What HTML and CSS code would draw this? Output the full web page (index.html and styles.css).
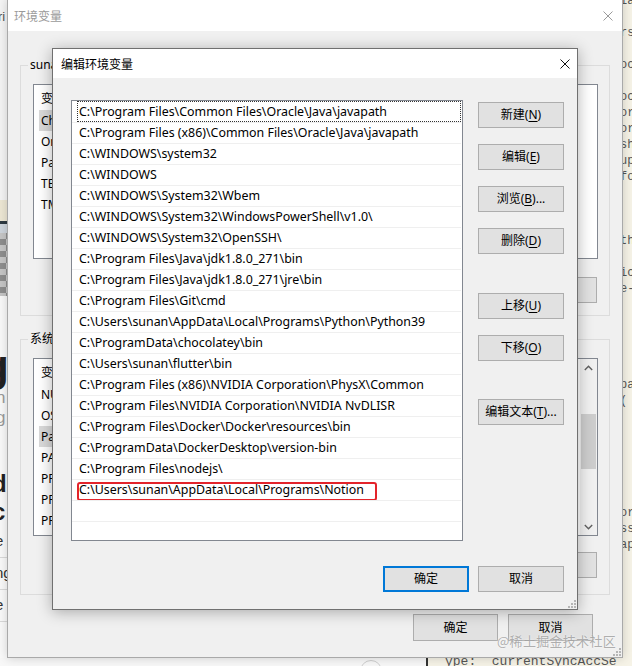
FILE: index.html
```html
<!DOCTYPE html>
<html lang="zh-CN">
<head>
<meta charset="utf-8">
<title>编辑环境变量</title>
<link rel="stylesheet" href="styles.css">
</head>
<body>
<div class="desk">
  <div class="bg-left">
    <div class="bl-top"><span class="bl-ri">ri</span></div>
    <div class="bl-beige"></div>
    <div class="bl-dark"></div>
    <div class="bl-blue"></div>
    <div class="bl-checker"></div>
    <div class="bl-page">
      <div class="bl-big">g</div>
      <div class="bl-gray">n</div>
      <div class="bl-gray">g</div>
      <div class="bl-bold bl-d">d</div>
      <div class="bl-bold">c</div>
      <div class="bl-line">e</div>
      <div class="bl-line">ng</div>
      <div class="bl-line">e</div>
    </div>
  </div>

  <div class="bg-right">
<pre class="code">ia

rs

oc

oc
or
or
sh
up
fo



th

ic
e-





pa
(






or
ss
ap







</pre>
  </div>

  <div class="bg-bottom">
    <div class="bb-left"><span class="bb-circle"></span></div>
    <div class="bb-rule"></div>
    <div class="bb-code">ype:  currentSyncAccSe</div>
  </div>

  <div class="win win-outer">
    <div class="titlebar outer-title">
      <span class="title-text inactive">环境变量</span>
      <svg class="close" width="10" height="10" viewBox="0 0 10 10"><path d="M0.5 0.5 L9.5 9.5 M9.5 0.5 L0.5 9.5" stroke="#9a9a9a" stroke-width="1" fill="none"/></svg>
    </div>
    <div class="outer-body">
      <div class="group group-user">
        <span class="group-label">sunan 的用户变量(<u>U</u>)</span>
        <div class="vlist vlist-user">
          <div class="vlist-body">
            <div class="vhead"><span class="vcol">变量</span><span class="vcol">值</span></div>
            <div class="vrow"><span class="vname sel">ChocolateyLastPathUpdate</span></div>
            <div class="vrow"><span class="vname">OneDrive</span></div>
            <div class="vrow"><span class="vname">Path</span></div>
            <div class="vrow"><span class="vname">TEMP</span></div>
            <div class="vrow"><span class="vname">TMP</span></div>
          </div>
        </div>
        <div class="group-actions">
          <div class="btn wbtn">新建(<u>N</u>)...</div>
          <div class="btn wbtn">编辑(<u>E</u>)...</div>
          <div class="btn wbtn">删除(<u>D</u>)</div>
        </div>
      </div>

      <div class="group group-sys">
        <span class="group-label">系统变量(<u>S</u>)</span>
        <div class="vlist vlist-sys">
          <div class="vlist-body">
            <div class="vhead"><span class="vcol">变量</span><span class="vcol">值</span></div>
            <div class="vrow"><span class="vname">NUMBER_OF_PROCESSORS</span></div>
            <div class="vrow"><span class="vname">OS</span></div>
            <div class="vrow"><span class="vname sel">Path</span></div>
            <div class="vrow"><span class="vname">PATHEXT</span></div>
            <div class="vrow"><span class="vname">PROCESSOR_ARCHITECTURE</span></div>
            <div class="vrow"><span class="vname">PROCESSOR_IDENTIFIER</span></div>
            <div class="vrow"><span class="vname">PROCESSOR_LEVEL</span></div>
          </div>
          <div class="vscroll">
            <div class="sb-arrow"><svg width="9" height="6" viewBox="0 0 9 6"><path d="M0.8 5 L4.5 1.3 L8.2 5" stroke="#606060" stroke-width="1.4" fill="none"/></svg></div>
            <div class="sb-track"><div class="sb-thumb"></div></div>
            <div class="sb-arrow"><svg width="9" height="6" viewBox="0 0 9 6"><path d="M0.8 1 L4.5 4.7 L8.2 1" stroke="#606060" stroke-width="1.4" fill="none"/></svg></div>
          </div>
        </div>
        <div class="group-actions">
          <div class="btn wbtn">新建(<u>W</u>)...</div>
          <div class="btn wbtn">编辑(<u>I</u>)...</div>
          <div class="btn wbtn">删除(<u>L</u>)</div>
        </div>
      </div>

      <div class="outer-footer">
        <div class="btn obtn">确定</div>
        <div class="btn obtn">取消</div>
      </div>
    </div>
    <svg class="grip grip-outer" width="8" height="8" viewBox="0 0 8 8"><g fill="#b5b5b5"><rect x="6" y="0" width="2" height="2"/><rect x="3" y="3" width="2" height="2"/><rect x="6" y="3" width="2" height="2"/><rect x="0" y="6" width="2" height="2"/><rect x="3" y="6" width="2" height="2"/><rect x="6" y="6" width="2" height="2"/></g></svg>
  </div>

  <div class="win win-inner">
    <div class="titlebar inner-title">
      <span class="title-text">编辑环境变量</span>
      <svg class="close close-inner" width="10" height="10" viewBox="0 0 10 10"><path d="M0.5 0.5 L9.5 9.5 M9.5 0.5 L0.5 9.5" stroke="#111" stroke-width="1" fill="none"/></svg>
    </div>
    <div class="inner-body">
      <div class="inner-main">
        <div class="plist">
          <div class="prow focus"><span class="pcell">C:\Program Files\Common Files\Oracle\Java\javapath</span></div>
          <div class="prow"><span class="pcell">C:\Program Files (x86)\Common Files\Oracle\Java\javapath</span></div>
          <div class="prow"><span class="pcell">C:\WINDOWS\system32</span></div>
          <div class="prow"><span class="pcell">C:\WINDOWS</span></div>
          <div class="prow"><span class="pcell">C:\WINDOWS\System32\Wbem</span></div>
          <div class="prow"><span class="pcell">C:\WINDOWS\System32\WindowsPowerShell\v1.0\</span></div>
          <div class="prow"><span class="pcell">C:\WINDOWS\System32\OpenSSH\</span></div>
          <div class="prow"><span class="pcell">C:\Program Files\Java\jdk1.8.0_271\bin</span></div>
          <div class="prow"><span class="pcell">C:\Program Files\Java\jdk1.8.0_271\jre\bin</span></div>
          <div class="prow"><span class="pcell">C:\Program Files\Git\cmd</span></div>
          <div class="prow"><span class="pcell">C:\Users\sunan\AppData\Local\Programs\Python\Python39</span></div>
          <div class="prow"><span class="pcell">C:\ProgramData\chocolatey\bin</span></div>
          <div class="prow"><span class="pcell">C:\Users\sunan\flutter\bin</span></div>
          <div class="prow"><span class="pcell">C:\Program Files (x86)\NVIDIA Corporation\PhysX\Common</span></div>
          <div class="prow"><span class="pcell">C:\Program Files\NVIDIA Corporation\NVIDIA NvDLISR</span></div>
          <div class="prow"><span class="pcell">C:\Program Files\Docker\Docker\resources\bin</span></div>
          <div class="prow"><span class="pcell">C:\ProgramData\DockerDesktop\version-bin</span></div>
          <div class="prow"><span class="pcell">C:\Program Files\nodejs\</span></div>
          <div class="prow"><span class="pcell">C:\Users\sunan\AppData\Local\Programs\Notion</span><span class="mark"></span></div>
          <div class="prow"><span class="pcell"></span></div>
          <div class="prow"><span class="pcell"></span></div>
        </div>
        <div class="side-buttons">
          <div class="btn sbtn">新建(<u>N</u>)</div>
          <div class="btn sbtn">编辑(<u>E</u>)</div>
          <div class="btn sbtn">浏览(<u>B</u>)...</div>
          <div class="btn sbtn">删除(<u>D</u>)</div>
          <div class="btn sbtn gap-a">上移(<u>U</u>)</div>
          <div class="btn sbtn">下移(<u>O</u>)</div>
          <div class="btn sbtn gap-b">编辑文本(<u>T</u>)...</div>
        </div>
      </div>
      <div class="inner-footer">
        <div class="btn fbtn default">确定</div>
        <div class="btn fbtn">取消</div>
      </div>
    </div>
    <svg class="grip grip-inner" width="8" height="8" viewBox="0 0 8 8"><g fill="#b5b5b5"><rect x="6" y="0" width="2" height="2"/><rect x="3" y="3" width="2" height="2"/><rect x="6" y="3" width="2" height="2"/><rect x="0" y="6" width="2" height="2"/><rect x="3" y="6" width="2" height="2"/><rect x="6" y="6" width="2" height="2"/></g></svg>
  </div>

  <div class="watermark">@稀土掘金技术社区</div>
</div>
</body>
</html>
```

FILE: styles.css
```css
* { box-sizing: border-box; }
html, body { margin: 0; padding: 0; }
body {
  width: 632px;
  height: 666px;
  overflow: hidden;
  background: #f4f4f4;
  font-family: "Noto Sans", "Noto Sans CJK SC", sans-serif;
  font-size: 12px;
  color: #000;
}
u { text-decoration-thickness: 1px; text-underline-offset: 2px; }

.desk { position: relative; width: 632px; height: 666px; overflow: hidden; }

/* ---------- background page, left strip ---------- */
.bg-left {
  position: absolute; left: 0; top: 0; width: 8px; height: 666px;
  overflow: hidden; display: flex; flex-direction: column; background: #fafafa;
}
.bl-top { height: 200px; background: #f5f5f5; padding-top: 8px; }
.bl-ri { display: block; margin-left: -2px; font-family: "Liberation Sans", sans-serif; font-size: 13px; line-height: 18px; color: #555; }
.bl-beige { height: 21px; background: #eee8d5; }
.bl-dark { height: 3px; background: #2e3a42; }
.bl-blue { height: 9px; background: #cfd6dd; }
.bl-checker {
  height: 63px;
  background: conic-gradient(#8e8e8e 25%, #c6c6c6 0 50%, #8e8e8e 0 75%, #c6c6c6 0) 0 0 / 12px 12px;
}
.bl-page { flex: 1; background: #fafafa; padding-top: 48px; font-family: "Liberation Sans", sans-serif; }
.bl-big { font-size: 44px; font-weight: 700; line-height: 44px; color: #222; margin-left: -18px; }
.bl-gray { font-size: 17px; line-height: 20px; color: #9a9a9a; margin-left: -4px; }
.bl-d { margin-top: 42px; }
.bl-bold { font-size: 24px; font-weight: 700; line-height: 28px; color: #222; margin-left: -8px; }
.bl-line { height: 32px; line-height: 30px; font-size: 15px; color: #333; border-bottom: 1px solid #dadada; margin-left: -5px; }
.bl-line:first-of-type { margin-top: 10px; }

/* ---------- background page, right strip ---------- */
.bg-right {
  position: absolute; left: 623px; top: -7px; width: 9px; height: 673px;
  background: #f6f3e7; overflow: hidden;
}
.code {
  margin: 0 0 0 -3px;
  font-family: "Liberation Mono", monospace; font-size: 12px; line-height: 16px; color: #555;
}

/* ---------- background page, bottom strip ---------- */
.bg-bottom {
  position: absolute; left: 0; top: 658px; width: 632px; height: 8px;
  display: flex; overflow: hidden;
}
.bb-left { width: 426px; background: #f8f8f8; position: relative; }
.bb-circle { position: absolute; left: 360px; top: 2px; width: 22px; height: 22px; border: 1px solid #cfcfcf; border-radius: 50%; }
.bb-rule { width: 2px; background: #333; }
.bb-code {
  flex: 1; background: #f6f3e7; padding-left: 17px;
  font-family: "Liberation Mono", monospace; font-size: 13px; line-height: 16px;
  color: #555; white-space: pre; margin-top: -4px;
}

/* ---------- windows ---------- */
.win { position: absolute; display: flex; flex-direction: column; background: #f0f0f0; }
.titlebar { display: flex; align-items: center; background: #fff; flex-shrink: 0; }
.title-text { font-family: "Noto Sans CJK SC", sans-serif; font-size: 12px; }
.title-text.inactive { color: #9a9a9a; }
.close { margin-left: auto; display: block; }

.win-outer {
  left: 7px; top: -1px; width: 616px; height: 659px;
  border: 1px solid #a9a9a9;
  box-shadow: 0 0 10px rgba(0, 0, 0, 0.18);
}
.outer-title { height: 31px; padding-left: 6px; }
.outer-title .close { margin-right: 9px; }
.outer-body { flex: 1; padding: 34px 12px 0 12px; display: flex; flex-direction: column; }

.group {
  position: relative;
  border: 1px solid #dcdcdc;
  padding: 18px 11px 12px 12px;
}
.group-sys { margin-top: 23px; padding-bottom: 16px; }
.group-label {
  position: absolute; left: 7px; top: -9px;
  padding: 0 2px; background: #f0f0f0;
  font-family: "Noto Sans", "Noto Sans CJK SC", sans-serif; font-size: 12px; line-height: 16px;
}
.vlist { border: 1px solid #828790; background: #fff; display: flex; overflow: hidden; }
.vlist-user { height: 175px; }
.vlist-sys { height: 178px; }
.vlist-body { flex: 1; min-width: 0; }
.vhead { height: 25px; display: flex; align-items: center; padding-left: 7px; gap: 140px; }
.vrow { height: 21px; margin-left: 5px; line-height: 21px; white-space: nowrap; }
.vname { display: inline-block; width: 170px; padding-left: 2px; }
.vname.sel { background: #d9d9d9; }

.vscroll { width: 17px; background: #f0f0f0; display: flex; flex-direction: column; }
.sb-arrow { height: 17px; display: flex; align-items: center; justify-content: center; }
.sb-track { flex: 1; padding: 38px 1px 0 1px; }
.sb-thumb { height: 55px; background: #cdcdcd; }

.group-actions { display: flex; justify-content: flex-end; gap: 10px; margin-top: 18px; padding-right: 1px; }
.group-sys .group-actions { margin-top: 16px; }

.btn {
  display: flex; align-items: center; justify-content: center;
  background: #e1e1e1; border: 1px solid #adadad;
  font-family: "Noto Sans", "Noto Sans CJK SC", sans-serif; font-size: 12px; line-height: 16px;
  white-space: nowrap; color: #000;
}
.btn.default { border: 2px solid #0078d7; }
.wbtn { width: 85px; height: 26px; }
.outer-footer { display: flex; justify-content: flex-end; gap: 10px; margin-top: 19px; padding-right: 17px; }
.obtn { width: 85px; height: 27px; }

.grip { position: absolute; right: 1px; bottom: 1px; }

/* ---------- inner dialog ---------- */
.win-inner {
  left: 52px; top: 48px; width: 526px; height: 562px;
  border: 1px solid #707070;
  box-shadow: 0 2px 14px rgba(0, 0, 0, 0.3);
}
.inner-title { height: 29px; padding-left: 8px; }
.close-inner { margin-right: 7px; }
.inner-body { flex: 1; padding: 22px 13px 0 18px; display: flex; flex-direction: column; }
.inner-main { display: flex; gap: 15px; }

.plist {
  width: 392px; height: 441px;
  border: 1px solid #828790; background: #fff; overflow: hidden;
  font-size: 12.4px;
}
.prow {
  position: relative; display: flex;
  height: 21px; margin-right: 1px; padding-left: 5px;
  border-top: 1px solid #efefef;
}
.prow:first-child { border-top-color: transparent; }
.pcell {
  flex: 1; height: 21px; margin-top: -1px;
  border: 1px solid transparent; padding-left: 1px;
  line-height: 19px; white-space: nowrap; overflow: hidden;
}
.prow.focus .pcell { border: 1px dotted #333; }
.mark {
  position: absolute; left: 5px; top: 2px; width: 300px; height: 19px;
  border: 2px solid #e3242b; border-radius: 3px;
}

.side-buttons { width: 86px; display: flex; flex-direction: column; gap: 16px; padding-top: 2px; }
.sbtn { height: 26px; }
.gap-a { margin-top: 23px; }
.gap-b { margin-top: 22px; }

.inner-footer { display: flex; justify-content: flex-end; gap: 9px; margin-top: 25px; }
.fbtn { width: 86px; height: 26px; }

/* ---------- watermark ---------- */
.watermark {
  position: absolute; left: 497px; top: 632px;
  font-family: "Noto Sans CJK SC", sans-serif; font-size: 13px; line-height: 18px;
  letter-spacing: 0.3px;
  color: rgba(150, 150, 150, 0.75);
  text-shadow: 0 0 2px rgba(255, 255, 255, 0.8);
}
```
